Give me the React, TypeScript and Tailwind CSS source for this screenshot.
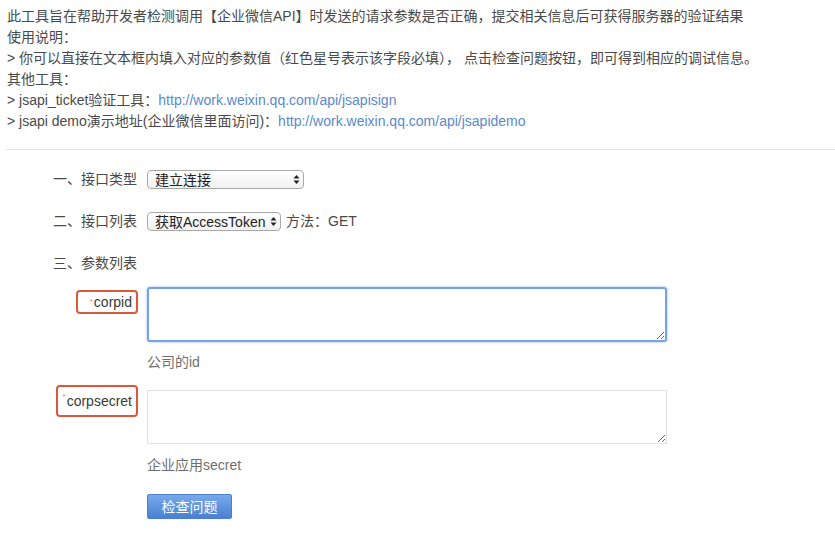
const font = "font-['Liberation_Sans','Noto_Sans_CJK_SC',sans-serif]";

function FakeSelect({ value, width }: { value: string; width: string }) {
  return (
    <div
      className={`${width} h-[19px] flex items-center justify-between pl-[7px] pr-[3px] border border-[#a9a9a9] rounded-[4px] bg-gradient-to-b from-white to-[#f1f1f1] text-[14px] text-[#222] leading-none`}
    >
      <span>{value}</span>
      <svg width="7" height="11" viewBox="0 0 7 11" className="text-[#222]">
        <path d="M3.5 1 L6.5 4.5 L0.5 4.5 Z" fill="currentColor" />
        <path d="M3.5 10 L6.5 6.5 L0.5 6.5 Z" fill="currentColor" />
      </svg>
    </div>
  );
}

function Label({ name, box }: { name: string; box: string }) {
  return (
    <div
      className={`${box} flex items-center justify-end pr-[4px] border-2 border-[#d9593b] rounded-[4px] bg-white`}
    >
      <span className="text-[8px] text-[#e07a7a] self-start mt-[4px] mr-[1px]">*</span>
      <span className="text-[14px] text-[#3a3a3a]">{name}</span>
    </div>
  );
}

export default function App() {
  return (
    <div className={`${font} w-[835px] h-[546px] bg-white text-[14px] text-[#4a4a4a] overflow-hidden`}>
      <div className="pl-[7px] pt-[6px] leading-[21px] whitespace-nowrap">
        <p>此工具旨在帮助开发者检测调用【企业微信API】时发送的请求参数是否正确，提交相关信息后可获得服务器的验证结果</p>
        <p>使用说明：</p>
        <p>&gt; 你可以直接在文本框内填入对应的参数值（红色星号表示该字段必填）， 点击检查问题按钮，即可得到相应的调试信息。</p>
        <p>其他工具：</p>
        <p>
          &gt; jsapi_ticket验证工具：
          <a className="text-[#5a89cf]">http://work.weixin.qq.com/api/jsapisign</a>
        </p>
        <p>
          &gt; jsapi demo演示地址(企业微信里面访问)：
          <a className="text-[#5a89cf]">http://work.weixin.qq.com/api/jsapidemo</a>
        </p>
      </div>

      <div className="ml-[6px] mt-[17px] border-t border-[#e6e6e6]" />

      <div className="pl-[53px] pt-[20px]">
        <div className="flex items-center h-[19px]">
          <span className="w-[94px]">一、接口类型</span>
          <FakeSelect value="建立连接" width="w-[157px]" />
        </div>

        <div className="flex items-center h-[19px] mt-[23px]">
          <span className="w-[94px]">二、接口列表</span>
          <FakeSelect value="获取AccessToken" width="w-[134px]" />
          <span className="ml-[5px]">方法：GET</span>
        </div>

        <div className="flex items-center h-[19px] mt-[23px]">
          <span>三、参数列表</span>
        </div>

        <div className="flex items-start mt-[14px]">
          <div className="w-[85px] flex justify-end mt-[3px]">
            <Label name="corpid" box="w-[62px] h-[24px]" />
          </div>
          <div className="ml-[9px]">
            <textarea className="block w-[520px] h-[55px] border-2 border-[#76a2e6] rounded-[3px] shadow-[0_0_3px_#9dbcf0] outline-none resize-y" />
            <p className="mt-[10px] leading-[20px] text-[#6f6f6f]">公司的id</p>
          </div>
        </div>

        <div className="flex items-start mt-[18px]">
          <div className="w-[85px] flex justify-end -mt-[5px]">
            <Label name="corpsecret" box="w-[82px] h-[32px]" />
          </div>
          <div className="ml-[9px]">
            <textarea className="block w-[520px] h-[54px] border border-[#e2e2e2] outline-none resize-y" />
            <p className="mt-[11px] leading-[20px] text-[#6f6f6f]">企业应用secret</p>
            <button className="mt-[19px] w-[85px] h-[25px] rounded-[2px] border border-[#4c80cc] bg-gradient-to-b from-[#77a9ec] to-[#4a80d2] text-white text-[14px] leading-none">
              检查问题
            </button>
          </div>
        </div>
      </div>
    </div>
  );
}
